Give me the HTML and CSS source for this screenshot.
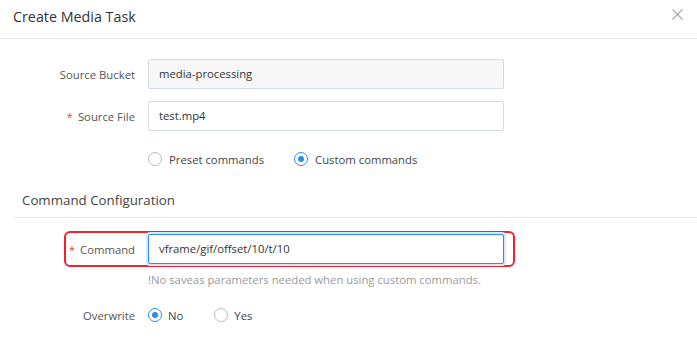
FILE: index.html
```html
<!DOCTYPE html>
<html>
<head>
<meta charset="utf-8">
<link rel="stylesheet" href="styles.css">
</head>
<body>
<div class="dialog">
  <div class="header">
    <span class="title">Create Media Task</span>
    <svg class="close" width="11" height="11" viewBox="0 0 11 11"><path d="M0.5 0.5L10.5 10.5M10.5 0.5L0.5 10.5" stroke="#a3acba" stroke-width="1.2" fill="none"/></svg>
  </div>
  <div class="form">
    <div class="row">
      <div class="label">Source Bucket</div>
      <div class="input disabled">media-processing</div>
    </div>
    <div class="row">
      <div class="label"><span class="req">*</span>Source File</div>
      <div class="input">test.mp4</div>
    </div>
    <div class="radio-row">
      <div class="label"></div>
      <div class="radios">
        <span class="radio"><span class="circle"></span>Preset commands</span>
        <span class="radio"><span class="circle on"></span>Custom commands</span>
      </div>
    </div>
    <div class="section">Command Configuration</div>
    <div class="highlight">
      <div class="label"><span class="req">*</span>Command</div>
      <div class="input focus">vframe/gif/offset/10/t/10</div>
    </div>
    <div class="hint">!No saveas parameters needed when using custom commands.</div>
    <div class="radio-row overwrite">
      <div class="label">Overwrite</div>
      <div class="radios small">
        <span class="radio"><span class="circle on"></span>No</span>
        <span class="radio"><span class="circle"></span>Yes</span>
      </div>
    </div>
  </div>
</div>
</body>
</html>
```
FILE: styles.css
```css
* { box-sizing: border-box; }
html, body { margin: 0; padding: 0; background: #fff; }
body {
  font-family: "Open Sans", "Noto Sans", sans-serif;
  font-size: 11.3px;
  color: #333;
  width: 697px;
  height: 338px;
  overflow: hidden;
}
.header {
  height: 39px;
  border-bottom: 1px solid #e2e6ec;
  display: flex;
  align-items: flex-start;
  justify-content: space-between;
  padding: 7px 14px 0 13px;
}
.title { font-size: 14.3px; color: #333; line-height: 20px; }
.close { margin-top: 2px; }
.form { padding-top: 20px; }
.row { display: flex; align-items: center; height: 30px; margin-bottom: 12px; }
.label {
  width: 148px;
  padding-right: 13px;
  text-align: right;
  color: #555;
  flex-shrink: 0;
}
.req { color: #f04134; margin-right: 5px; font-size: 11px; }
.input {
  width: 356px;
  height: 30px;
  border: 1px solid #d3dbe6;
  border-radius: 2px;
  padding: 0 10px;
  line-height: 28px;
  color: #333;
}
.input.disabled { background: #f7f7f7; }
.radio-row { display: flex; align-items: center; height: 20px; margin-top: 18px; }
.radios { display: flex; gap: 30px; }
.radios.small { gap: 31px; }
.radio { display: inline-flex; align-items: center; color: #444; }
.circle {
  width: 14px; height: 14px;
  border: 1px solid #b8bcc4;
  border-radius: 50%;
  margin-right: 7px;
  position: relative;
  background: #fff;
}
.circle.on { border-color: #2d8cf0; }
.circle.on::after {
  content: "";
  position: absolute;
  left: 3px; top: 3px;
  width: 6px; height: 6px;
  border-radius: 50%;
  background: #2d8cf0;
}
.section {
  margin: 14px 0 0 14px;
  padding-left: 8px;
  height: 35px;
  line-height: 34px;
  border-bottom: 1px solid #e2e6ec;
  font-size: 13.3px;
  color: #444;
}
.highlight {
  display: flex;
  align-items: center;
  margin: 13px 0 0 64px;
  width: 451px;
  border: 2px solid #f5222d;
  border-radius: 6px;
  padding: 1px 9px 1px 0;
}
.highlight .label { width: 82px; }
.input.focus {
  border-color: #2d8cf0;
  box-shadow: 0 0 0 2px #d5e8fc;
}
.hint {
  margin: 5px 0 0 148px;
  line-height: 16px;
  color: #999;
}
.overwrite { margin-top: 17px; }
.overwrite .radios .circle { margin-right: 6px; }
```
